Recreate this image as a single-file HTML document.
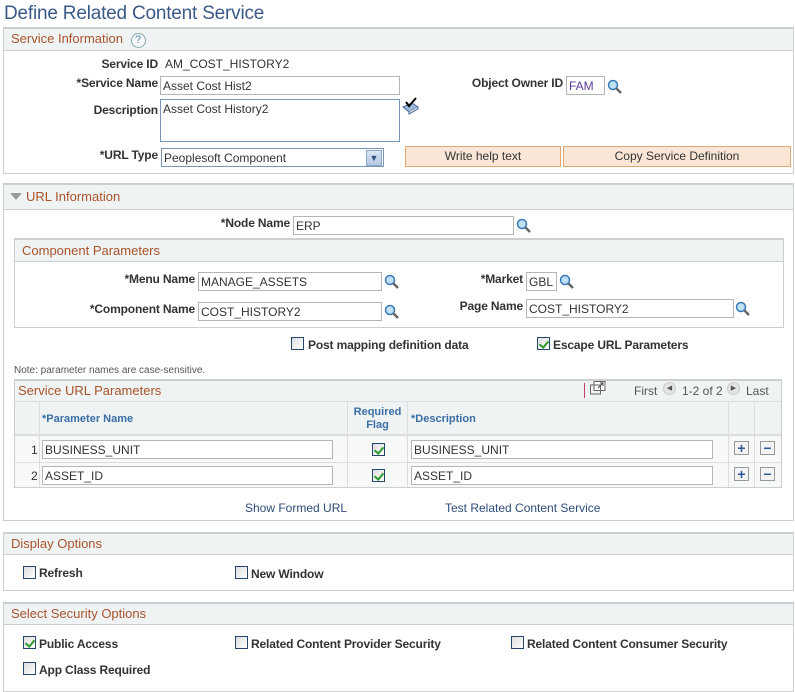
<!DOCTYPE html>
<html><head><meta charset="utf-8"><style>
*{box-sizing:border-box}
body{margin:0;width:795px;height:689px;background:#fff;font-family:"Liberation Sans",Arial,sans-serif;font-size:12px;color:#333;position:relative;overflow:hidden}
.a{position:absolute}
.title{left:4px;top:3px;font-size:19px;color:#3b5a8a;letter-spacing:-0.2px}
.box{position:absolute;border:1px solid #cbcfd1;border-top:2px solid #cbcfd1}
.hdr{position:absolute;left:0;right:0;top:0;background:#eff3f4;border-bottom:1px solid #cbcfd1;color:#a8532a;font-size:13px;padding-left:7px}
.lbl{position:absolute;font-weight:bold;color:#333;text-align:right;white-space:nowrap;letter-spacing:-0.15px}
.inp{position:absolute;border:1px solid #b5b5b5;background:#fff;height:19px;padding:2px 2px;font-size:12px;color:#333;white-space:nowrap;overflow:hidden}
.mag{position:absolute;width:15px;height:15px}
.cb{position:absolute;width:13px;height:13px;border:1px solid #26466d;background:linear-gradient(135deg,#ddd,#fff)}
.cb.on::after{content:"";position:absolute;left:3px;top:1px;width:4px;height:7px;border:solid #2a9a2a;border-width:0 2px 2px 0;transform:rotate(40deg)}
.btn{position:absolute;background:#f9e6d6;border:1px solid #e0a870;text-align:center;font-size:12px;color:#333;line-height:18px}
.link{position:absolute;color:#2d4d7a}
.gh{position:absolute;font-weight:bold;color:#3a6ea5;font-size:11px}
.pm{position:absolute;width:15px;height:14px;border:1px solid #999;background:#f3f3f3;color:#2f5a9a;font-weight:bold;text-align:center;line-height:12px;font-size:14px}
</style></head><body>
<svg width="0" height="0" style="position:absolute"><defs><symbol id="m" viewBox="0 0 15 15"><circle cx="6" cy="6" r="4.5" fill="#bfe0f5" stroke="#3a79b5" stroke-width="1.5"/><line x1="9.5" y1="9.5" x2="14" y2="14" stroke="#666" stroke-width="2.5"/></symbol></defs></svg>
<div class="a title">Define Related Content Service</div>

<div class="box" style="left:3px;top:27px;width:791px;height:147px">
<div class="hdr" style="height:22px;line-height:20px">Service Information <span style="display:inline-block;width:15px;height:15px;border:1px solid #8aa;border-radius:50%;text-align:center;font-size:11px;line-height:13px;color:#5a8ab5;background:#f4f8fa;margin-left:4px">?</span></div>
</div>
<div class="lbl" style="right:637px;top:57px">Service ID</div>
<div class="a" style="left:165px;top:57px">AM_COST_HISTORY2</div>
<div class="lbl" style="right:637px;top:76px">*Service Name</div>
<div class="inp" style="left:160px;top:76px;width:240px">Asset Cost Hist2</div>
<div class="lbl" style="right:637px;top:103px">Description</div>
<div class="inp" style="left:160px;top:99px;width:240px;height:43px;border-color:#7a96b5">Asset Cost History2</div>
<svg class="a" style="left:401px;top:97px" width="18" height="18"><path d="M2 10 L11 6 L17 10 L8 15 Z" fill="#9cb8dc" stroke="#4a6a9a"/><path d="M8 15 L8 17 L17 12 L17 10" fill="#ddd" stroke="#4a6a9a"/><path d="M5 5 L8 9 L15 1" fill="none" stroke="#000" stroke-width="2"/></svg>
<div class="lbl" style="right:637px;top:148px">*URL Type</div>
<div class="inp" style="left:161px;top:148px;width:223px;border-color:#7a96b5">Peoplesoft Component</div>
<div class="a" style="left:366px;top:150px;width:16px;height:16px;background:linear-gradient(#dbe6f2,#b3c9e2);border:1px solid #8aa5c5;color:#2f4f7f;font-size:9px;text-align:center;line-height:14px">▼</div>
<div class="lbl" style="right:232px;top:76px">Object Owner ID</div>
<div class="inp" style="left:566px;top:76px;width:39px;color:#5a3a9a">FAM</div>
<svg class="mag" style="left:607px;top:79px"><use href="#m"/></svg>
<div class="btn" style="left:405px;top:146px;width:156px;height:21px">Write help text</div>
<div class="btn" style="left:563px;top:146px;width:228px;height:21px">Copy Service Definition</div>

<div class="box" style="left:3px;top:183px;width:791px;height:338px">
<div class="hdr" style="height:25px;line-height:24px;padding-left:22px"><span style="position:absolute;left:6px;top:8px;border-left:6px solid transparent;border-right:6px solid transparent;border-top:7px solid #999"></span>URL Information</div>
</div>
<div class="lbl" style="right:505px;top:216px">*Node Name</div>
<div class="inp" style="left:293px;top:216px;width:221px">ERP</div>
<svg class="mag" style="left:516px;top:218px"><use href="#m"/></svg>

<div class="box" style="left:14px;top:238px;width:770px;height:90px">
<div class="hdr" style="height:22px;line-height:21px">Component Parameters</div>
</div>
<div class="lbl" style="right:600px;top:272px">*Menu Name</div>
<div class="inp" style="left:198px;top:272px;width:184px">MANAGE_ASSETS</div>
<svg class="mag" style="left:384px;top:274px"><use href="#m"/></svg>
<div class="lbl" style="right:272px;top:272px">*Market</div>
<div class="inp" style="left:526px;top:272px;width:31px">GBL</div>
<svg class="mag" style="left:559px;top:274px"><use href="#m"/></svg>
<div class="lbl" style="right:600px;top:302px">*Component Name</div>
<div class="inp" style="left:198px;top:302px;width:184px">COST_HISTORY2</div>
<svg class="mag" style="left:384px;top:304px"><use href="#m"/></svg>
<div class="lbl" style="right:272px;top:299px">Page Name</div>
<div class="inp" style="left:526px;top:299px;width:208px">COST_HISTORY2</div>
<svg class="mag" style="left:735px;top:301px"><use href="#m"/></svg>

<div class="cb" style="left:291px;top:337px"></div>
<div class="lbl" style="left:308px;top:338px">Post mapping definition data</div>
<div class="cb on" style="left:537px;top:337px"></div>
<div class="lbl" style="left:553px;top:338px">Escape URL Parameters</div>
<div class="a" style="left:14px;top:365px;font-size:10px;color:#555">Note: parameter names are case-sensitive.</div>

<div class="a" style="left:14px;top:379px;width:768px;height:109px;border:1px solid #cbcfd1;border-top:2px solid #cbcfd1"></div>
<div class="a" style="left:15px;top:381px;width:766px;height:21px;background:#eff3f4;border-bottom:1px solid #ddd;color:#a8532a;font-size:13px;padding-left:3px;line-height:19px">Service URL Parameters</div>
<div class="a" style="left:584px;top:383px;width:1px;height:15px;background:#c04070"></div>
<svg class="a" style="left:590px;top:381px" width="16" height="14"><rect x="4" y="0.5" width="11" height="9" fill="#fff" stroke="#666"/><rect x="0.5" y="4" width="10" height="9" fill="none" stroke="#666"/><path d="M8 7 L13 2 M10 2 H13 V5" stroke="#444" fill="none"/></svg>
<div class="a" style="left:634px;top:384px;color:#555">First</div>
<div class="a" style="left:663px;top:382px;width:13px;height:13px;border-radius:50%;background:#e4e4e4;border:1px solid #ccc;font-size:7px;text-align:center;line-height:11px;color:#555">◀</div>
<div class="a" style="left:682px;top:384px;color:#555">1-2 of 2</div>
<div class="a" style="left:727px;top:382px;width:13px;height:13px;border-radius:50%;background:#e4e4e4;border:1px solid #ccc;font-size:7px;text-align:center;line-height:11px;color:#555">▶</div>
<div class="a" style="left:746px;top:384px;color:#555">Last</div>
<div class="a" style="left:15px;top:402px;width:766px;height:34px;background:#eff3f4;border-bottom:2px solid #ddd"></div>
<div class="a" style="left:15px;top:436px;width:766px;height:51px;background:#f7f8f8"></div>
<div class="a" style="left:15px;top:462px;width:766px;height:1px;background:#ddd"></div>
<div class="a" style="left:39px;top:402px;width:1px;height:85px;background:#ddd"></div>
<div class="a" style="left:347px;top:402px;width:1px;height:85px;background:#ddd"></div>
<div class="a" style="left:407px;top:402px;width:1px;height:85px;background:#ddd"></div>
<div class="a" style="left:728px;top:402px;width:1px;height:85px;background:#ddd"></div>
<div class="a" style="left:754px;top:402px;width:1px;height:85px;background:#ddd"></div>
<div class="gh" style="left:42px;top:413px">*Parameter Name</div>
<div class="gh" style="left:348px;top:406px;width:59px;text-align:center;line-height:13px">Required Flag</div>
<div class="gh" style="left:411px;top:413px">*Description</div>
<div class="a" style="left:31px;top:443px">1</div>
<div class="a" style="left:31px;top:469px">2</div>
<div class="inp" style="left:42px;top:440px;width:291px">BUSINESS_UNIT</div>
<div class="inp" style="left:42px;top:466px;width:291px">ASSET_ID</div>
<div class="cb on" style="left:372px;top:443px"></div>
<div class="cb on" style="left:372px;top:469px"></div>
<div class="inp" style="left:411px;top:440px;width:302px">BUSINESS_UNIT</div>
<div class="inp" style="left:411px;top:466px;width:302px">ASSET_ID</div>
<div class="pm" style="left:734px;top:441px">+</div>
<div class="pm" style="left:734px;top:467px">+</div>
<div class="pm" style="left:760px;top:441px">−</div>
<div class="pm" style="left:760px;top:467px">−</div>

<div class="link" style="left:245px;top:501px">Show Formed URL</div>
<div class="link" style="left:445px;top:501px">Test Related Content Service</div>

<div class="box" style="left:3px;top:532px;width:791px;height:59px">
<div class="hdr" style="height:21px;line-height:20px">Display Options</div>
</div>
<div class="cb" style="left:23px;top:566px"></div>
<div class="lbl" style="left:39px;top:566px">Refresh</div>
<div class="cb" style="left:235px;top:566px"></div>
<div class="lbl" style="left:251px;top:567px">New Window</div>

<div class="box" style="left:3px;top:602px;width:791px;height:90px">
<div class="hdr" style="height:21px;line-height:20px">Select Security Options</div>
</div>
<div class="cb on" style="left:23px;top:636px"></div>
<div class="lbl" style="left:39px;top:637px">Public Access</div>
<div class="cb" style="left:235px;top:636px"></div>
<div class="lbl" style="left:251px;top:637px">Related Content Provider Security</div>
<div class="cb" style="left:511px;top:636px"></div>
<div class="lbl" style="left:527px;top:637px">Related Content Consumer Security</div>
<div class="cb" style="left:23px;top:662px"></div>
<div class="lbl" style="left:39px;top:663px">App Class Required</div>
</body></html>
